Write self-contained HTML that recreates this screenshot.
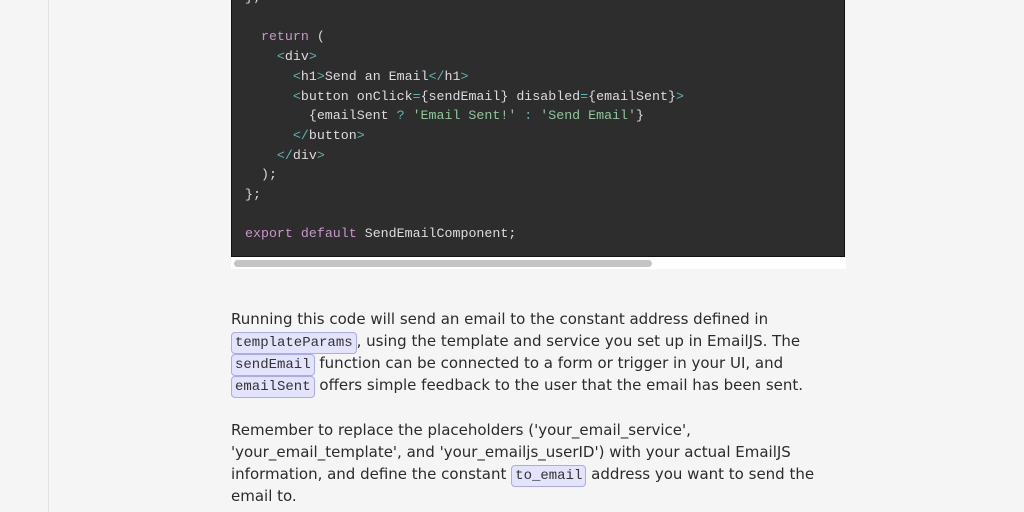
<!DOCTYPE html>
<html><head><meta charset="utf-8"><style>
html,body{margin:0;padding:0;width:1024px;height:512px;overflow:hidden;background:#f5f5f5;}
.vline{position:absolute;left:48px;top:0;width:1px;height:512px;background:#dde3e6;}
.code{position:absolute;left:231px;top:-20px;width:614px;height:277px;background:#2d2d2d;border:1px solid #111;box-sizing:border-box;}
pre{margin:0;position:absolute;left:13px;top:7px;font-family:"Liberation Mono",monospace;font-size:13.3px;line-height:19.7px;color:#dcdcdc;}
.k{color:#c995c9}.t{color:#5fb3b3}.s{color:#8fc79a}
.sb{position:absolute;left:231px;top:257px;width:615px;height:12px;background:#fff;}
.th{position:absolute;left:3px;top:3px;width:418px;height:7px;border-radius:4px;background:#c4c4c4;}
.p{position:absolute;left:231px;white-space:nowrap;font-family:"DejaVu Sans",sans-serif;font-size:15px;line-height:22px;color:#2b2b2b;}
.p div{height:22px;overflow:visible;}
code{font-family:"Liberation Mono",monospace;font-size:14px;line-height:14px;background:#e3e3fb;border:1px solid #a9abf2;border-radius:4px;padding:2px 3px;color:#333;}
</style></head><body>
<div class="vline"></div>
<div class="code"><pre>};

  <span class="k">return</span> (
    <span class="t">&lt;</span>div<span class="t">&gt;</span>
      <span class="t">&lt;</span>h1<span class="t">&gt;</span>Send an Email<span class="t">&lt;/</span>h1<span class="t">&gt;</span>
      <span class="t">&lt;</span>button onClick<span class="t">=</span>{sendEmail} disabled<span class="t">=</span>{emailSent}<span class="t">&gt;</span>
        {emailSent <span class="t">?</span> <span class="s">'Email Sent!'</span> <span class="t">:</span> <span class="s">'Send Email'</span>}
      <span class="t">&lt;/</span>button<span class="t">&gt;</span>
    <span class="t">&lt;/</span>div<span class="t">&gt;</span>
  );
};

<span class="k">export</span> <span class="k">default</span> SendEmailComponent;</pre></div>
<div class="sb"><div class="th"></div></div>
<div class="p" style="top:308px"><div>Running this code will send an email to the constant address defined in</div><div><code>templateParams</code>, using the template and service you set up in EmailJS. The</div><div><code>sendEmail</code> function can be connected to a form or trigger in your UI, and</div><div><code>emailSent</code> offers simple feedback to the user that the email has been sent.</div></div>
<div class="p" style="top:419px"><div>Remember to replace the placeholders ('your_email_service',</div><div>'your_email_template', and 'your_emailjs_userID') with your actual EmailJS</div><div>information, and define the constant <code>to_email</code> address you want to send the</div><div>email to.</div></div>
</body></html>
